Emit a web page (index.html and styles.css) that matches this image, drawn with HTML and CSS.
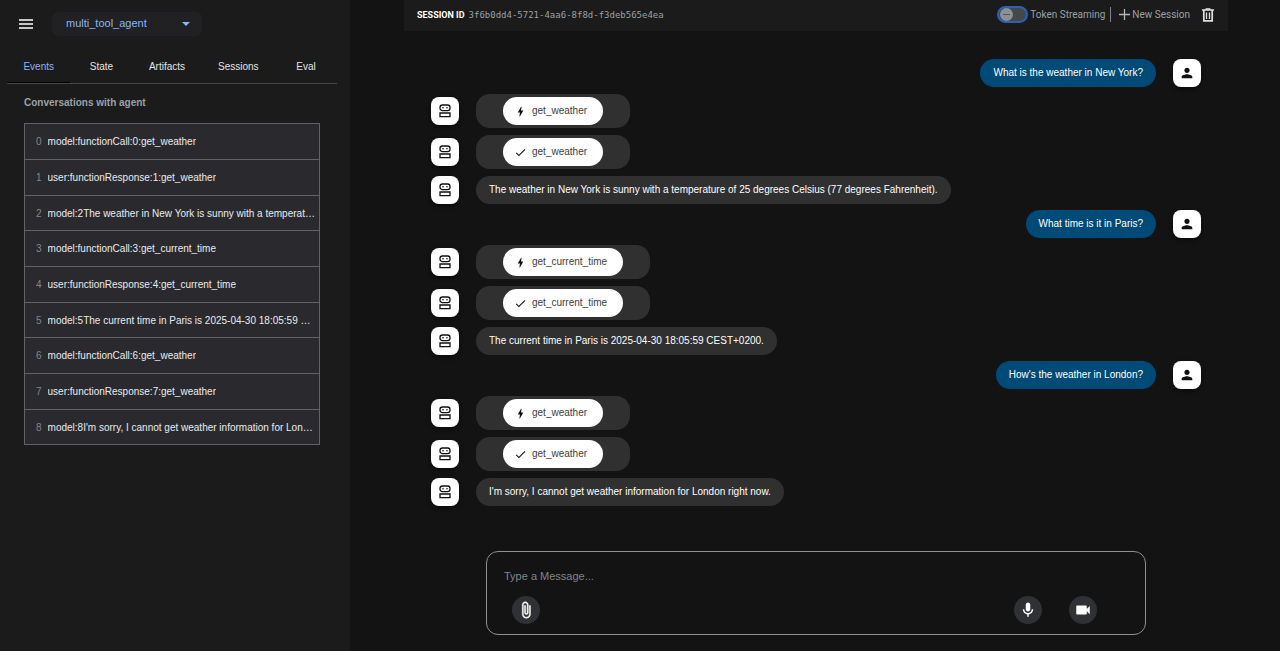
FILE: index.html
```html
<!DOCTYPE html>
<html lang="en">
<head>
    <meta charset="UTF-8">
    <meta name="viewport" content="width=device-width, initial-scale=1.0">
    <title>Agent Development Kit Dev UI</title>
    <link rel="stylesheet" href="styles.css">
</head>
<body>

<!-- Shared icons -->
<svg class="sprite" aria-hidden="true">
    <symbol id="robot" viewBox="0 0 16 16">
        <rect x="3" y="2" width="10" height="5.6" rx="2.4" fill="none" stroke="#111" stroke-width="1.3"/>
        <circle cx="6" cy="4.8" r=".8" fill="#111"/>
        <circle cx="10" cy="4.8" r=".8" fill="#111"/>
        <path d="M3 10h10v3.6H3z" fill="none" stroke="#111" stroke-width="1.3"/>
    </symbol>
    <symbol id="person" viewBox="0 0 24 24">
        <path fill="#111" d="M12 12c2.21 0 4-1.79 4-4s-1.79-4-4-4-4 1.79-4 4 1.79 4 4 4zm0 2c-2.67 0-8 1.34-8 4v2h16v-2c0-2.66-5.33-4-8-4z"/>
    </symbol>
    <symbol id="bolt" viewBox="0 0 24 24">
        <path fill="#111" d="M11 21h-1l1-7H7.5c-.88 0-.33-.75-.31-.78C8.48 10.94 10.42 7.54 13.01 3h1l-1 7h3.51c.4 0 .62.19.4.66C12.97 17.55 11 21 11 21z"/>
    </symbol>
    <symbol id="check" viewBox="0 0 24 24">
        <path fill="#111" d="M9 16.17 4.83 12l-1.42 1.41L9 19 21 7l-1.41-1.41z"/>
    </symbol>
</svg>

<div class="layout">
    <aside class="sidebar">
        <div class="agent-bar">
            <button class="icon-btn" aria-label="Toggle side panel">
                <svg width="14" height="10" viewBox="0 0 14 10"><path fill="#c4c7c5" d="M0 0h14v2H0zM0 4h14v2H0zM0 8h14v2H0z"/></svg>
            </button>
            <div class="agent-select">
                <select aria-label="Agent">
                    <option>multi_tool_agent</option>
                </select>
                <svg width="8" height="4" viewBox="0 0 8 4"><path fill="#8ab4f8" d="M0 0h8L4 4z"/></svg>
            </div>
        </div>

        <nav class="tabs">
            <button class="tab active">Events</button>
            <button class="tab">State</button>
            <button class="tab">Artifacts</button>
            <button class="tab">Sessions</button>
            <button class="tab">Eval</button>
        </nav>

        <h2>Conversations with agent</h2>
        <ul class="events">
            <li><button><span class="num">0</span><span class="name">model:functionCall:0:get_weather</span></button></li>
            <li><button><span class="num">1</span><span class="name">user:functionResponse:1:get_weather</span></button></li>
            <li><button><span class="num">2</span><span class="name">model:2The weather in New York is sunny with a temperat…</span></button></li>
            <li><button><span class="num">3</span><span class="name">model:functionCall:3:get_current_time</span></button></li>
            <li><button><span class="num">4</span><span class="name">user:functionResponse:4:get_current_time</span></button></li>
            <li><button><span class="num">5</span><span class="name">model:5The current time in Paris is 2025-04-30 18:05:59 …</span></button></li>
            <li><button><span class="num">6</span><span class="name">model:functionCall:6:get_weather</span></button></li>
            <li><button><span class="num">7</span><span class="name">user:functionResponse:7:get_weather</span></button></li>
            <li><button><span class="num">8</span><span class="name">model:8I'm sorry, I cannot get weather information for Lon…</span></button></li>
        </ul>
    </aside>

    <main class="chat">
        <header class="toolbar">
            <div class="session">
                <span class="session-label">SESSION ID</span>
                <span class="session-id">3f6b0dd4-5721-4aa6-8f8d-f3deb565e4ea</span>
            </div>
            <div class="actions">
                <input type="checkbox" id="streaming" class="switch">
                <label for="streaming">Token Streaming</label>
                <span class="divider"></span>
                <button class="new-session">
                    <svg width="11" height="11" viewBox="0 0 11 11"><path stroke="#b4b7b6" stroke-width="1.3" d="M5.5 0v11M0 5.5h11"/></svg>
                    New Session
                </button>
                <button class="icon-btn" aria-label="Delete session">
                    <svg width="12" height="14" viewBox="0 0 12 14"><path fill="none" stroke="#e0e0e0" stroke-width="1.7" d="M0 2h12M3.500 1h5M1.800 2v10.800h8.400V2"/><path stroke="#e0e0e0" stroke-width="1.300" d="M4.500 4.500v6.500M7.500 4.500v6.500"/></svg>
                </button>
            </div>
        </header>

        <section class="messages">
            <div class="turn">
                <div class="row user">
                    <div class="bubble">What is the weather in New York?</div>
                    <span class="avatar"><svg width="16" height="16"><use href="#person"/></svg></span>
                </div>
                <div class="row">
                    <span class="avatar"><svg width="16" height="16"><use href="#robot"/></svg></span>
                    <div class="bubble call"><button class="chip"><svg width="13" height="13"><use href="#bolt"/></svg>get_weather</button></div>
                </div>
                <div class="row">
                    <span class="avatar"><svg width="16" height="16"><use href="#robot"/></svg></span>
                    <div class="bubble call"><button class="chip"><svg width="13" height="13"><use href="#check"/></svg>get_weather</button></div>
                </div>
                <div class="row">
                    <span class="avatar"><svg width="16" height="16"><use href="#robot"/></svg></span>
                    <div class="bubble">The weather in New York is sunny with a temperature of 25 degrees Celsius (77 degrees Fahrenheit).</div>
                </div>
            </div>

            <div class="turn">
                <div class="row user">
                    <div class="bubble">What time is it in Paris?</div>
                    <span class="avatar"><svg width="16" height="16"><use href="#person"/></svg></span>
                </div>
                <div class="row">
                    <span class="avatar"><svg width="16" height="16"><use href="#robot"/></svg></span>
                    <div class="bubble call"><button class="chip"><svg width="13" height="13"><use href="#bolt"/></svg>get_current_time</button></div>
                </div>
                <div class="row">
                    <span class="avatar"><svg width="16" height="16"><use href="#robot"/></svg></span>
                    <div class="bubble call"><button class="chip"><svg width="13" height="13"><use href="#check"/></svg>get_current_time</button></div>
                </div>
                <div class="row">
                    <span class="avatar"><svg width="16" height="16"><use href="#robot"/></svg></span>
                    <div class="bubble">The current time in Paris is 2025-04-30 18:05:59 CEST+0200.</div>
                </div>
            </div>

            <div class="turn">
                <div class="row user">
                    <div class="bubble">How's the weather in London?</div>
                    <span class="avatar"><svg width="16" height="16"><use href="#person"/></svg></span>
                </div>
                <div class="row">
                    <span class="avatar"><svg width="16" height="16"><use href="#robot"/></svg></span>
                    <div class="bubble call"><button class="chip"><svg width="13" height="13"><use href="#bolt"/></svg>get_weather</button></div>
                </div>
                <div class="row">
                    <span class="avatar"><svg width="16" height="16"><use href="#robot"/></svg></span>
                    <div class="bubble call"><button class="chip"><svg width="13" height="13"><use href="#check"/></svg>get_weather</button></div>
                </div>
                <div class="row">
                    <span class="avatar"><svg width="16" height="16"><use href="#robot"/></svg></span>
                    <div class="bubble">I'm sorry, I cannot get weather information for London right now.</div>
                </div>
            </div>
        </section>

        <form class="composer">
            <input type="text" aria-label="Message" placeholder="Type a Message...">
            <div class="composer-actions">
                <button type="button" class="round" aria-label="Attach file">
                    <svg width="18" height="18" viewBox="0 0 24 24"><path fill="#fff" stroke="#fff" stroke-width=".6" d="M16.5 6v11.5c0 2.21-1.79 4-4 4s-4-1.79-4-4V5c0-1.38 1.12-2.5 2.5-2.5s2.5 1.12 2.5 2.5v10.5c0 .55-.45 1-1 1s-1-.45-1-1V6H10v9.5c0 1.38 1.12 2.5 2.5 2.5s2.5-1.12 2.5-2.5V5c0-2.21-1.79-4-4-4S7 2.79 7 5v12.5c0 3.04 2.46 5.5 5.5 5.5s5.5-2.46 5.5-5.5V6h-1.5z"/></svg>
                </button>
                <button type="button" class="round mic" aria-label="Use microphone">
                    <svg width="18" height="18" viewBox="0 0 24 24"><path fill="#fff" d="M12 14c1.66 0 3-1.34 3-3V5c0-1.66-1.34-3-3-3S9 3.34 9 5v6c0 1.66 1.34 3 3 3zm5-3c0 2.76-2.24 5-5 5s-5-2.24-5-5H5c0 3.53 2.61 6.43 6 6.92V21h2v-3.08c3.39-.49 6-3.39 6-6.92h-2z"/></svg>
                </button>
                <button type="button" class="round" aria-label="Use camera">
                    <svg width="18" height="18" viewBox="0 0 24 24"><path fill="#fff" d="M17 10.5V7c0-.55-.45-1-1-1H4c-.55 0-1 .45-1 1v10c0 .55.45 1 1 1h12c.55 0 1-.45 1-1v-3.500l4 4v-11l-4 4z"/></svg>
                </button>
            </div>
        </form>
    </main>
</div>

</body>
</html>
```
FILE: styles.css
```css
* {
    box-sizing: border-box;
}
body {
    margin: 0;
    font-family: "Liberation Sans", Arial, sans-serif;
    font-size: 10px;
    background-color: #131314;
    color: #fff;
}
button, select, input {
    font: inherit;
    color: inherit;
}
button {
    background: none;
    border: none;
    padding: 0;
    cursor: pointer;
}
svg {
    display: block;
    flex-shrink: 0;
}
.sprite {
    display: none;
}
.layout {
    display: flex;
    min-height: 100vh;
}

/* Side panel */
.sidebar {
    width: 350px;
    flex-shrink: 0;
    background-color: #1b1b1b;
}
.agent-bar {
    display: flex;
    align-items: center;
    gap: 19px;
    padding: 12px 19px 0;
}
.agent-select {
    display: grid;
    align-items: center;
    width: 150px;
}
.agent-select select {
    grid-area: 1 / 1;
    appearance: none;
    height: 24px;
    padding: 0 24px 2px 14px;
    border: none;
    border-radius: 6px;
    background-color: #212123;
    color: #8ab4f8;
    font-size: 11px;
}
.agent-select svg {
    grid-area: 1 / 1;
    justify-self: end;
    margin-right: 12px;
    pointer-events: none;
}
.tabs {
    display: flex;
    margin: 14px 13px 0 7px;
    border-bottom: 1px solid #444746;
}
.tab {
    flex: 1 0 auto;
    min-width: 62px;
    height: 33px;
    padding: 0 16px;
    color: #e3e3e3;
}
.tab.active {
    color: #8ab4f8;
    border-bottom: 1px solid #000;
}
.sidebar h2 {
    margin: 12px 24px 13px;
    font-size: 10px;
    line-height: 14px;
    color: #9aa0a6;
}
.events {
    list-style: none;
    margin: 0 30px 0 24px;
    padding: 0;
    border: 1px solid #5f6368;
    border-bottom: none;
    background-color: #2a2a2e;
}
.events li {
    height: 36px;
    border-bottom: 1px solid #5f6368;
}
.events li:nth-child(3n) {
    height: 35px;
}
.events button {
    display: flex;
    align-items: center;
    gap: 6px;
    width: 100%;
    height: 100%;
    padding: 0 2px 0 11px;
    text-align: left;
}
.num {
    color: #80868b;
}
.name {
    overflow: hidden;
    white-space: nowrap;
    text-overflow: ellipsis;
    color: #e8eaed;
}

/* Chat area */
.chat {
    flex: 1;
    min-width: 0;
    display: flex;
    flex-direction: column;
    padding: 0 52px 16px 54px;
}
.toolbar {
    display: flex;
    align-items: center;
    justify-content: space-between;
    height: 31px;
    padding: 0 14px 2px 13px;
    background-color: #1b1b1b;
}
.session, .actions, .new-session {
    display: flex;
    align-items: center;
}
.session {
    gap: 4px;
}
.session-label {
    font-family: Roboto, sans-serif;
    font-size: 9px;
    font-weight: bold;
}
.session-id {
    font-family: "DejaVu Sans Mono", monospace;
    font-size: 9px;
    color: #9aa0a6;
}
.actions {
    font-family: Roboto, sans-serif;
    color: #9aa0a6;
}
.switch {
    appearance: none;
    display: flex;
    align-items: center;
    width: 31px;
    height: 17px;
    margin: 0 2px 0 0;
    padding: 0 1px;
    border: 2px solid #2a62b8;
    border-radius: 9px;
    background-color: #45484b;
}
.switch::before {
    content: "";
    width: 13px;
    height: 13px;
    border-radius: 50%;
    background: linear-gradient(#555, #555) center / 7px 1px no-repeat #8e9194;
}
.divider {
    width: 1px;
    height: 15px;
    margin: 0 8px 0 5px;
    background-color: #80868b;
}
.new-session {
    gap: 2px;
    margin-right: 12px;
}
.messages {
    display: flex;
    flex-direction: column;
    gap: 6px;
    padding: 28px 27px 0;
}
.turn {
    display: flex;
    flex-direction: column;
    gap: 7px;
}
.row {
    display: flex;
    align-items: center;
    gap: 17px;
}
.row.user {
    justify-content: flex-end;
}
.avatar {
    display: flex;
    flex-shrink: 0;
    align-items: center;
    justify-content: center;
    width: 28px;
    height: 28px;
    border-radius: 8px;
    background-color: #fff;
    box-shadow: 0 2px 4px rgba(0, 0, 0, 0.5);
}
.bubble {
    padding: 7px 13px;
    border-radius: 14px;
    line-height: 14px;
    background-color: #303030;
}
.user .bubble {
    background-color: #004a77;
}
.bubble.call {
    padding: 3px 27px;
}
.chip {
    display: flex;
    align-items: center;
    gap: 5px;
    height: 28px;
    padding: 0 16px 0 11px;
    border-radius: 14px;
    background-color: #fff;
    color: #3c4043;
}

/* Message box */
.composer {
    margin: auto 82px 0;
    padding: 16px 48px 10px 17px;
    border: 1px solid #8e918f;
    border-radius: 12px;
}
.composer input {
    display: block;
    width: 100%;
    height: 16px;
    padding: 0;
    border: none;
    outline: none;
    background: none;
    font-size: 11px;
}
.composer input::placeholder {
    color: #80868b;
}
.composer-actions {
    display: flex;
    gap: 27px;
    padding: 12px 0 0 8px;
}
.round {
    display: flex;
    align-items: center;
    justify-content: center;
    width: 28px;
    height: 28px;
    border-radius: 50%;
    background-color: #303134;
}
.mic {
    margin-left: auto;
}
```
